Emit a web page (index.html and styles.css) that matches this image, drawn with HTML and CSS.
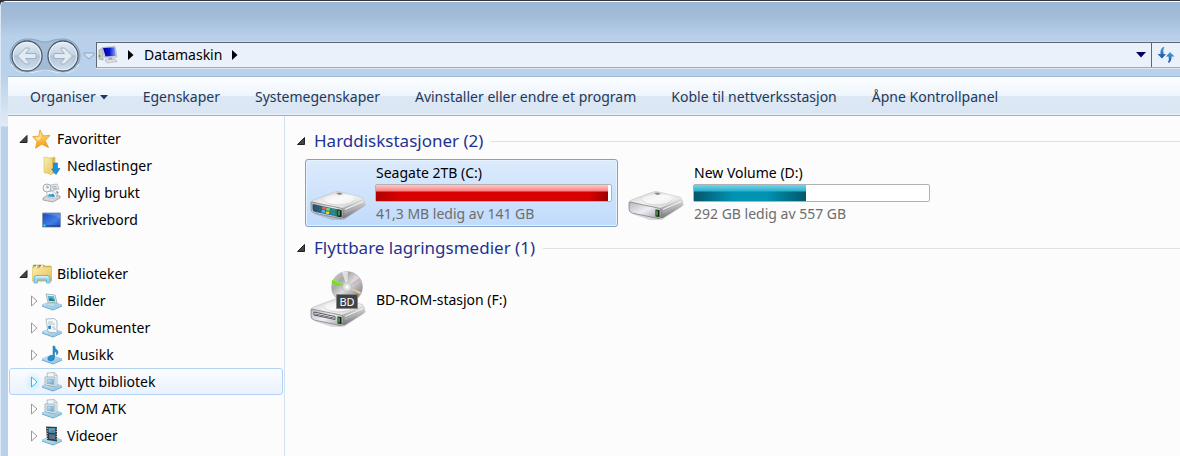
FILE: index.html
```html
<!DOCTYPE html>
<html lang="nb">
<head>
<meta charset="utf-8">
<title>Datamaskin</title>
<link rel="stylesheet" href="styles.css">
</head>
<body>
<svg class="defs" aria-hidden="true">
  <defs>
    <linearGradient id="steelTop" x1="0" y1="0" x2="1" y2="1"><stop offset="0" stop-color="#c6c6c8"/><stop offset=".5" stop-color="#f6f6f6"/><stop offset="1" stop-color="#cdcdcf"/></linearGradient>
    <linearGradient id="steelSide" x1="0" y1="0" x2="0" y2="1"><stop offset="0" stop-color="#e0e0e2"/><stop offset="1" stop-color="#77777a"/></linearGradient>
    <linearGradient id="steelFront" x1="0" y1="0" x2="1" y2="1"><stop offset="0" stop-color="#b4b4b8"/><stop offset=".5" stop-color="#ededf5"/><stop offset="1" stop-color="#a2a2a6"/></linearGradient>
    <linearGradient id="teal" x1="0" y1="0" x2="1" y2="0"><stop offset="0" stop-color="#2b4a6c"/><stop offset=".45" stop-color="#2a7486"/><stop offset=".75" stop-color="#2f8a84"/><stop offset="1" stop-color="#123f4d"/></linearGradient>
    <linearGradient id="screen" x1="0" y1="0" x2="1" y2="1"><stop offset="0" stop-color="#1b45b4"/><stop offset=".6" stop-color="#3f7fe8"/><stop offset="1" stop-color="#1d4cba"/></linearGradient>
    <linearGradient id="navy" x1="0" y1="0" x2="1" y2="0"><stop offset="0" stop-color="#0000a8"/><stop offset=".5" stop-color="#0a18d0"/><stop offset="1" stop-color="#8fa8f4"/></linearGradient>
    <linearGradient id="gold" x1="0" y1="0" x2="0" y2="1"><stop offset="0" stop-color="#ffe27a"/><stop offset="1" stop-color="#f79a1c"/></linearGradient>
    <linearGradient id="folder" x1="0" y1="0" x2="1" y2="1"><stop offset="0" stop-color="#fbf0b4"/><stop offset="1" stop-color="#e2bd50"/></linearGradient>
    <linearGradient id="tray" x1="0" y1="0" x2="1" y2="1"><stop offset="0" stop-color="#d8effa"/><stop offset="1" stop-color="#84c2e6"/></linearGradient>
    <linearGradient id="pane" x1="0" y1="0" x2="1" y2="1"><stop offset="0" stop-color="#cfe4f0"/><stop offset="1" stop-color="#5fa6d2"/></linearGradient>
    <linearGradient id="disc" x1="0" y1="0" x2="1" y2="1"><stop offset="0" stop-color="#dcdcdc"/><stop offset=".3" stop-color="#a8a8a8"/><stop offset=".5" stop-color="#dcdcdc"/><stop offset=".8" stop-color="#909090"/><stop offset="1" stop-color="#cfcfcf"/></linearGradient>
    <linearGradient id="orb" x1="0" y1="0" x2="0" y2="1"><stop offset="0" stop-color="#e3edf6"/><stop offset=".45" stop-color="#c6d4e2"/><stop offset=".5" stop-color="#b2c4d6"/><stop offset="1" stop-color="#cfdfee"/></linearGradient>
    <linearGradient id="sync" x1="0" y1="0" x2="0" y2="1"><stop offset="0" stop-color="#4aa0dc"/><stop offset="1" stop-color="#1a4ea0"/></linearGradient>
    <symbol id="drive-body" viewBox="0 0 60 64">
      <path d="M6 53 24 59 36 59 58 44 55 38Z" fill="#000" opacity=".14"/>
      <path d="M3 41Q4 39 8 38L27 31Q30 30 33 31L53 36Q57 37 54 39L36 47Q34 48 31 47L5 42Z" fill="url(#steelTop)" stroke="#b8b8ba" stroke-width=".5"/>
      <path d="M34 47 54 38.500Q57 37.500 57 40V43Q57 45 55 46L37 57Q34 58 34 56Z" fill="url(#steelSide)"/>
      <path d="M37 48.500 55 40.500" stroke="#f6f6f6" stroke-width="1"/>
      <path d="M37 51.500 55 43.500" stroke="#b9b9bb" stroke-width=".7"/>
      <path d="M4 41 32 47Q35 47 35 50V55Q35 58 32 57.500L6 52Q3 51 3 48V42Q3 41 4 41Z" fill="url(#steelFront)" stroke="#77777b" stroke-width=".7"/>
      <ellipse cx="31" cy="38.500" rx="15" ry="5" fill="#fff" opacity=".45"/>
      <path d="M16 39.500Q20 44 31 44 43 43.500 46 39" fill="none" stroke="#c6c6c8" stroke-width=".6"/>
      <path d="M28 32 32 31.500 35 33 31 34Z" fill="#8a8a8d"/>
    </symbol>
    <symbol id="led" viewBox="0 0 60 64">
      <path d="M29.500 48.500 33.500 49V56L29.500 55.500Z" fill="#142018"/><path d="M31 49.500V54.500" stroke="#58d84c" stroke-width="1.200"/>
    </symbol>
    <symbol id="library-tray" viewBox="0 0 20 20">
      <path d="M0 14 9 10 20 14 11 18Z" fill="url(#tray)" stroke="#86bcdc" stroke-width=".6"/>
      <path d="M0 14.500 11 18.500 20 14.500V15.500L11 19.500 0 15.500Z" fill="#5aa4cf"/>
    </symbol>
    <symbol id="generic-library" viewBox="0 0 20 20">
      <use href="#library-tray"/>
      <path d="M5 1 12 .5 15 3V13L14 15 6 14Z" fill="#f3f6f8" stroke="#a4b2bb" stroke-width=".8"/>
      <path d="M12 .5V3.500H15" fill="#dce5ea" stroke="#a4b2bb" stroke-width=".6"/>
      <path d="M3 5H13V14.500L3 13Z" fill="#e6eef3" stroke="#8ea9b9" stroke-width=".8"/>
      <path d="M5 7H11.500V12.500L5 11.500Z" fill="url(#pane)" stroke="#74a0bc" stroke-width=".6"/>
    </symbol>
  </defs>
</svg>

<div class="window">
  <header class="top">
    <div class="history">
      <svg class="orbs" viewBox="0 0 86 38" aria-hidden="true">
        <path d="M19 2C30 2 31 5 37 5S44 2 55 2A17 17 0 0 1 55 36C44 36 43 33 37 33S30 36 19 36A17 17 0 0 1 19 2Z" fill="#a3bbd5" stroke="#8099b5" stroke-width=".8"/>
        <path d="M3 27Q8 36 19 36C30 36 31 33 37 33S44 36 55 36Q66 36 71 27" fill="none" stroke="#d9e8f7" stroke-width="1.200"/>
      </svg>
      <button class="orb" aria-label="Tilbake"><svg viewBox="0 0 32 32"><circle cx="16" cy="16" r="15" fill="url(#orb)" stroke="#4c5a6a" stroke-width="1.300"/><circle cx="16" cy="16" r="13.800" fill="none" stroke="#eef5fb" stroke-width=".9"/><path d="M6.500 16 14.500 8 18 8 18 9.500 14.500 13.500H25V18.500H14.500L18 22.500V24H14.500Z" fill="#e2ebf3" stroke="#a0b1c3" stroke-linejoin="round"/></svg></button>
      <button class="orb" aria-label="Frem"><svg viewBox="0 0 32 32"><circle cx="16" cy="16" r="15" fill="url(#orb)" stroke="#4c5a6a" stroke-width="1.300"/><circle cx="16" cy="16" r="13.800" fill="none" stroke="#eef5fb" stroke-width=".9"/><path d="M25.500 16 17.500 8 14 8 14 9.500 17.500 13.500H7V18.500H17.500L14 22.500V24H17.500Z" fill="#e2ebf3" stroke="#a0b1c3" stroke-linejoin="round"/></svg></button>
      <button class="recent" aria-label="Siste sider"><svg viewBox="0 0 12 8"><path d="M1 1H11V2.500L6 7 1 2.500Z" fill="#d4e2f0" stroke="#8da5c0"/></svg></button>
    </div>
    <div class="address">
      <div class="crumbs">
        <svg class="pc" viewBox="0 0 20 18" aria-hidden="true"><path d="M1 4 5 2V14L1 13Z" fill="#c8ccc9" stroke="#858b88" stroke-width=".5"/><path d="M1.500 9V11" stroke="#3bbb35" stroke-width="1.500"/><path d="M4 1.500 17 0.500 19 11 7 12Z" fill="#e6e8ec" stroke="#9da1aa" stroke-width=".6"/><path d="M5 2 16.500 1.300 18 10 7.500 10.600Z" fill="url(#navy)"/><path d="M11 12H14L15 14H10Z" fill="#9da1a5"/><path d="M7 14 17 13 19 15.500 9 17Z" fill="#dfe1e4" stroke="#a6a8ac" stroke-width=".6"/></svg>
        <svg class="caret" viewBox="0 0 6 10" aria-hidden="true"><path d="M0 0 5.500 5 0 10Z"/></svg>
        <a class="crumb" href="#">Datamaskin</a>
        <svg class="caret" viewBox="0 0 6 10" aria-hidden="true"><path d="M0 0 5.500 5 0 10Z"/></svg>
      </div>
      <button class="drop" aria-label="Tidligere plasseringer"><svg viewBox="0 0 10 6"><path d="M0 0H10L5 5.500Z" fill="#00005c"/></svg></button>
      <button class="refresh" aria-label="Oppdater"><svg viewBox="0 0 18 18"><path d="M6 1Q3 3 3.500 8H0.500L5 12.500 9 8H6.500Q5.500 4 7.500 1Z" fill="url(#sync)"/><path d="M12 17Q15 14 14.500 10.500H17.500L13 6 9 10.500H11.500Q12.500 14 11 16Z" fill="url(#sync)"/></svg></button>
    </div>
  </header>

  <div class="client">
    <nav class="toolbar" aria-label="Kommandoer">
      <button>Organiser<svg class="menu-arrow" viewBox="0 0 8 5" aria-hidden="true"><path d="M0 0H8L4 4.500Z" fill="#1e395b"/></svg></button>
      <button>Egenskaper</button>
      <button>Systemegenskaper</button>
      <button>Avinstaller eller endre et program</button>
      <button>Koble til nettverksstasjon</button>
      <button>Åpne Kontrollpanel</button>
    </nav>

    <div class="panes">
      <nav class="tree" aria-label="Mapper">
        <section class="branch">
          <a class="node root" href="#"><svg class="twist" viewBox="0 0 10 10"><path d="M8 1.500V8.500H1Z" fill="#444" stroke="#222" stroke-linejoin="round"/></svg>
            <svg class="icon" viewBox="0 0 20 20"><path d="M8 .8 11 6.800 18 6.500 13.200 11.500 16.500 18.500 9.600 15.200 3.600 19.300 5 12.500 .8 7.500 6.800 7.200Z" fill="url(#gold)" stroke="#e39a2c" stroke-width=".8" stroke-linejoin="round"/><path d="M8 3 9 9 6 12 3 8.500 7.500 8Z" fill="#fff0a8" opacity=".8"/></svg>Favoritter</a>
          <a class="node" href="#"><span class="twist"></span>
            <svg class="icon" viewBox="0 0 20 20"><path d="M2 1 8 2 13 1V17L8 18 2 16.500Z" fill="url(#folder)" stroke="#d8bf68" stroke-width=".6"/><path d="M8 3 13 1V17L8 19Z" fill="#ddba51"/><path d="M9 3V18" stroke="#fff5c4"/><path d="M11.500 7H15.500V12.500H18L14 18.500 9.500 13H11.500Z" fill="#1d91dc" stroke="#1474b7" stroke-width=".6"/></svg>Nedlastinger</a>
          <a class="node" href="#"><span class="twist"></span>
            <svg class="icon" viewBox="0 0 20 20"><path d="M8 2 15 1 17 6 9 8Z" fill="#e6e9eb" stroke="#a6adb3" stroke-width=".7"/><path d="M10 4 14 3.500M11 6 15 5" stroke="#8f989f" stroke-width=".8"/><path d="M14 8 17 9 15 12Z" fill="#8f969c"/><path d="M7 11 18 13 18 15 11 19 1 17V15Z" fill="#d3d6d9" stroke="#8e9398" stroke-width=".7"/><path d="M4 8 13 9 15 15 6 14.500Z" fill="#f3f9fc" stroke="#a3b0b9" stroke-width=".6"/><path d="M6 13.500Q6.500 10 9 11.500L11.500 10.500 13 14Z" fill="#3294c7"/><circle cx="5" cy="5" r="4" fill="#f4f7f9" stroke="#a5adb5"/><path d="M5 2.500V5L7 4" fill="none" stroke="#6b7e8c" stroke-width=".8"/></svg>Nylig brukt</a>
          <a class="node" href="#"><span class="twist"></span>
            <svg class="icon" viewBox="0 0 20 20"><path d="M.5 3H18.500V17H.5Z" fill="url(#screen)" stroke="#819cba"/><path d="M1 4Q12 4 18 9V4Z" fill="#77a1f0" opacity=".45"/><path d="M1 16H18" stroke="#182f62" stroke-width="1.200"/><circle cx="2.500" cy="15.500" r="1.300" fill="#35c6da"/></svg>Skrivebord</a>
        </section>
        <section class="branch">
          <a class="node root" href="#"><svg class="twist" viewBox="0 0 10 10"><path d="M8 1.500V8.500H1Z" fill="#444" stroke="#222" stroke-linejoin="round"/></svg>
            <svg class="icon" viewBox="0 0 20 20"><path d="M1 1H12L13 2H19V17H1Z" fill="#d9ba59" stroke="#cba846" stroke-width=".6"/><path d="M2 1.500H5V4H2ZM8 1.500H11V4H8Z" fill="#fff"/><path d="M2 1H4V2.500H2Z" fill="#39a746"/><path d="M7 1H9V2.500H7Z" fill="#dc4a3b"/><path d="M0 4H9L10 3H20V17H0Z" fill="url(#folder)" stroke="#d3b04b" stroke-width=".5"/><path d="M2 19V14Q2 11.500 5 11.500H15Q18 11.500 18 14V19H14.500V16H5.500V19Z" fill="#9bd3ef" stroke="#5ba9cf" stroke-width=".7"/><path d="M3.500 14Q4 12.800 6 12.800H14Q16 12.800 16.500 14" fill="none" stroke="#e3f6ff" stroke-width="1.200"/></svg>Biblioteker</a>
          <a class="node" href="#"><svg class="twist" viewBox="0 0 10 14"><path d="M2.500 2 8 7 2.500 12Z" class="hollow"/></svg>
            <svg class="icon" viewBox="0 0 20 20"><use href="#library-tray"/><path d="M4 3 13 4 15 12 6 11Z" fill="#f3f6f8" stroke="#8ea4b0" stroke-width=".8"/><path d="M5.500 4.700 12 5.300 13.500 10.500 7 9.900Z" fill="#4fb0dc"/><path d="M6.500 8.500 9 6.800 13 10.300 7 9.800Z" fill="#297b6d"/><path d="M6 12 14.500 13 11 15.500 4.500 14Z" fill="#c4dde9" stroke="#8fb4c8" stroke-width=".5"/></svg>Bilder</a>
          <a class="node" href="#"><svg class="twist" viewBox="0 0 10 14"><path d="M2.500 2 8 7 2.500 12Z" class="hollow"/></svg>
            <svg class="icon" viewBox="0 0 20 20"><use href="#library-tray"/><path d="M4 1 12 .5 15 3V15L6 14Z" fill="#f7fafb" stroke="#9badb8" stroke-width=".8"/><path d="M6 4H11M6 6H13M10 9H13M11 11H14" stroke="#95b1c2" stroke-width=".8"/><path d="M6 8 9 7.500V11L6.500 11Z" fill="#3f83bd"/></svg>Dokumenter</a>
          <a class="node" href="#"><svg class="twist" viewBox="0 0 10 14"><path d="M2.500 2 8 7 2.500 12Z" class="hollow"/></svg>
            <svg class="icon" viewBox="0 0 20 20"><use href="#library-tray"/><path d="M11 1H12.500Q13 4 15.500 5.500 17 8 14.500 10 15.500 7 12.500 6.500V12.500Q12.500 16 8.500 16 5 15.500 6 12.500 7.500 10 11 10.500Z" fill="#258fcf" stroke="#176da8" stroke-width=".5"/></svg>Musikk</a>
          <a class="node selected" href="#" aria-current="true"><svg class="twist" viewBox="0 0 10 14"><path d="M2.500 2 8 7 2.500 12Z" class="hollow"/></svg>
            <svg class="icon" viewBox="0 0 20 20"><use href="#generic-library"/></svg>Nytt bibliotek</a>
          <a class="node" href="#"><svg class="twist" viewBox="0 0 10 14"><path d="M2.500 2 8 7 2.500 12Z" class="hollow"/></svg>
            <svg class="icon" viewBox="0 0 20 20"><use href="#generic-library"/></svg>TOM ATK</a>
          <a class="node" href="#"><svg class="twist" viewBox="0 0 10 14"><path d="M2.500 2 8 7 2.500 12Z" class="hollow"/></svg>
            <svg class="icon" viewBox="0 0 20 20"><use href="#library-tray"/><path d="M4 .5 15 1V15.500L5 14Z" fill="#35383b"/><path d="M6.500 2H13V7L6.500 6.500Z" fill="#4ba0c8"/><path d="M7 8 13 8.600V13.500L7 12.800Z" fill="#3979a4"/><path d="M8 5.500 11 4 12.500 6.500ZM9 12 11 9.500 13 12.500Z" fill="#b95f38"/><path d="M5.200 2V14M14.200 2.500V15" stroke="#d9dddf" stroke-width="1" stroke-dasharray="1 1.500"/></svg>Videoer</a>
        </section>
      </nav>

      <main class="content">
        <section class="group">
          <h2><svg class="twist" viewBox="0 0 10 10" aria-hidden="true"><path d="M8.500 1.500V8.500H1.500Z" fill="#444" stroke="#222" stroke-linejoin="round"/></svg>Harddiskstasjoner (2)</h2>
          <div class="items">
            <article class="item chosen">
              <svg class="device" viewBox="0 0 60 64" aria-hidden="true"><use href="#drive-body"/><path d="M5 43 31 48.500Q33.500 49 33.500 51V55Q33.500 56.500 31 56L7 51Q4.500 50.500 4.500 48V44Z" fill="url(#teal)"/><path d="M14.500 45.500Q16 45 17.500 46.200V48.800Q16 48 14 48.500Z" fill="#ed6a38"/><path d="M18.300 46.500Q20 47.500 22 47L21.500 49.500Q20 50 18.200 49.200Z" fill="#8ed058"/><path d="M13.800 49.200Q15.500 48.800 17.300 49.800L17 52Q15.500 51.200 13.500 51.700Z" fill="#62b2f0"/><path d="M18 50.200Q19.500 51 21.300 50.600L21 53Q19.500 53.200 17.800 52.400Z" fill="#f4d045"/><use href="#led"/></svg>
              <div class="details">
                <span class="name">Seagate 2TB (C:)</span>
                <div class="gauge" role="img" aria-label="Nesten full"><div class="fill full" style="width:99%"></div></div>
                <span class="free">41,3 MB ledig av 141 GB</span>
              </div>
            </article>
            <article class="item">
              <svg class="device" viewBox="0 0 60 64" aria-hidden="true"><use href="#drive-body"/><use href="#led"/></svg>
              <div class="details">
                <span class="name">New Volume (D:)</span>
                <div class="gauge" role="img" aria-label="48 % brukt"><div class="fill" style="width:47.7%"></div></div>
                <span class="free">292 GB ledig av 557 GB</span>
              </div>
            </article>
          </div>
        </section>
        <section class="group">
          <h2><svg class="twist" viewBox="0 0 10 10" aria-hidden="true"><path d="M8.500 1.500V8.500H1.500Z" fill="#444" stroke="#222" stroke-linejoin="round"/></svg>Flyttbare lagringsmedier (1)</h2>
          <div class="items">
            <article class="item">
              <svg class="device" viewBox="0 0 60 64"><use href="#drive-body"/><path d="M6 44 27 48.500V51.500L6 47Z" fill="#f8f8f8" stroke="#55555a"/><path d="M7 46 26 50" stroke="#68686d"/><use href="#led"/>
                <circle cx="39" cy="19" r="15.500" fill="url(#disc)" stroke="#a5a5a5" stroke-width=".5"/><path d="M39 19 24 13 25.500 11Z" fill="#a3e632"/><path d="M39 19 24 12 24 16Z" fill="#72dc28"/><path d="M39 19 52 10 53 12Z" fill="#d8a6cc"/><path d="M39 19 53 24 52 26Z" fill="#f0d193"/><path d="M39 19 34 4 40 3.500Z" fill="#fff" opacity=".6"/><circle cx="39" cy="19" r="4.500" fill="#ddd" stroke="#b4b4b4" stroke-width=".6"/><circle cx="39" cy="19" r="1.800" fill="#fff"/>
                <path d="M28.500 26.500H49.500V40.500H28.500Z" fill="#424242" stroke="#858585" stroke-width=".8"/><text class="badge" x="39" y="38" text-anchor="middle">BD</text></svg>
              <div class="details"><span class="name">BD-ROM-stasjon (F:)</span></div>
            </article>
          </div>
        </section>
      </main>
    </div>
  </div>
</div>
</body>
</html>
```
FILE: styles.css
```css
* { box-sizing: border-box; }
body {
  margin: 0;
  background: #2f3036;
  font: 14px/20px "Noto Sans", "Open Sans", sans-serif;
  color: #000;
}
a { color: inherit; text-decoration: none; }
button { margin: 0; padding: 0; border: 0; background: none; font: inherit; color: inherit; }
svg { display: block; flex: none; }
.defs { position: absolute; width: 0; height: 0; }

.window {
  display: flex;
  flex-direction: column;
  height: 100vh;
  padding-left: 7px;
  border-top: 1px solid #35363d;
  border-left: 1px solid #dce8f4;
  border-top-left-radius: 6px;
  background: linear-gradient(#fff 1px, #9bb6d4 1px, #a5bed9 18px, #b8d0ea 36px, #b9d1ea 74px, #d9e6f4 115px, #dfeaf6 125px, #b9d1ea 126px);
  overflow: hidden;
}
.top { display: flex; align-items: flex-start; padding-top: 36px; height: 75px; flex: none; }

.history { position: relative; display: flex; align-items: center; gap: 4px; width: 88px; height: 38px; padding-left: 3px; }
.orbs { position: absolute; left: 0; top: 0; width: 86px; height: 38px; }
.orb { position: relative; width: 32px; height: 32px; }
.orb svg { width: 32px; height: 32px; }
.recent { width: 12px; }
.recent svg { width: 12px; height: 8px; }

.address {
  flex: 1;
  display: flex;
  height: 26px;
  margin-top: 5px;
  border: 1px solid #5c6775;
  border-right: 0;
  border-bottom-color: #9aacc0;
  background: #ebf1fa;
  box-shadow: 0 1px 0 #dce8f4, 0 -1px 0 #c9daed;
}
.crumbs { flex: 1; display: flex; align-items: center; gap: 10px; padding-left: 1px; }
.pc { width: 20px; height: 18px; }
.caret { width: 6px; height: 10px; }
.drop { width: 20px; display: grid; place-items: center; }
.drop svg { width: 10px; height: 6px; }
.refresh { width: 29px; display: grid; place-items: center; border-left: 1px solid #5c6775; }
.refresh svg { width: 18px; height: 18px; }

.client { flex: 1; display: flex; flex-direction: column; min-height: 0; }
.toolbar {
  display: flex;
  gap: 35px;
  flex: none;
  height: 40px;
  padding: 2px 0 0 22px;
  border-top: 1px solid #a0bbd8;
  border-bottom: 1px solid #a0afc3;
  background: linear-gradient(#fcfeff, #eef5fc 19px, #dde8f5 19px, #dbe6f4 36px, #e7effa 37px);
  color: #1e395b;
}
.toolbar button { display: flex; align-items: center; gap: 4px; white-space: nowrap; }
.menu-arrow { width: 8px; height: 5px; }

.panes { flex: 1; display: flex; min-height: 0; background: #fcfcfc; }
.tree { width: 277px; flex: none; padding: 9px 1px 0; border-right: 1px solid #d0e2f6; overflow: hidden; }
.branch + .branch { margin-top: 27px; }
.node { display: flex; align-items: center; height: 27px; padding-left: 19px; border: 1px solid transparent; border-radius: 3px; white-space: nowrap; }
.node .icon { width: 20px; height: 20px; margin: 0 5px 0 3px; }
.node .twist { width: 10px; height: 14px; }
.root { padding-left: 9px; }
.root .twist { height: 10px; }
.hollow { fill: #fff; stroke: #999; }
.selected { border-color: #b4d2f3; background: linear-gradient(#fafcff, #eaf2fd); }
.selected .twist { filter: drop-shadow(0 0 3px #80d8f8); }
.selected .hollow { stroke: #1fc4f3; }

.content { flex: 1; min-width: 0; padding: 9px 0 0 11px; overflow: hidden; }
.group + .group { margin-top: 5px; }
.group h2 {
  display: flex;
  align-items: center;
  height: 32px;
  margin: 0 0 2px;
  color: #1f3291;
  font-size: 17px;
  font-weight: 400;
  white-space: nowrap;
}
.group h2::after { content: ""; flex: 1; height: 1px; margin-left: 8px; background: #e0e0e0; }
.group h2 .twist { width: 10px; height: 10px; margin-right: 8px; }
.items { display: grid; grid-template-columns: repeat(2, 313px); gap: 5px; padding-left: 9px; }
.item { display: flex; align-items: center; height: 68px; padding: 0 5px 0 2px; border: 1px solid transparent; border-radius: 3px; }
.chosen { border-color: #7da2ce; background: linear-gradient(#dcebfc, #c1dbfc); box-shadow: inset 0 0 0 1px #e8f2fd; }
.device { width: 60px; height: 64px; margin-right: 7px; }
.badge { fill: #fff; font-size: 11px; }
.details { flex: 1; display: flex; flex-direction: column; }
.gauge {
  height: 18px;
  margin: 1px 0 2px;
  padding-right: 1px;
  border: 1px solid #b2b2b2;
  border-radius: 2px;
  background: #fff;
}
.fill {
  height: 100%;
  background:
    linear-gradient(#6fd6ec, #2fb0cd 6px, transparent 7px),
    linear-gradient(90deg, #04566c, #0093b2 35%, #0093b2 65%, #04566c);
}
.fill.full {
  background:
    linear-gradient(#ffc8c8, #fb8080 6px, transparent 7px),
    linear-gradient(90deg, #b00000, #d80000 10%, #d80000 92%, #9a0000);
}
.name, .free { padding-left: 1px; white-space: nowrap; }
.free { color: #6d6d6d; }
```
